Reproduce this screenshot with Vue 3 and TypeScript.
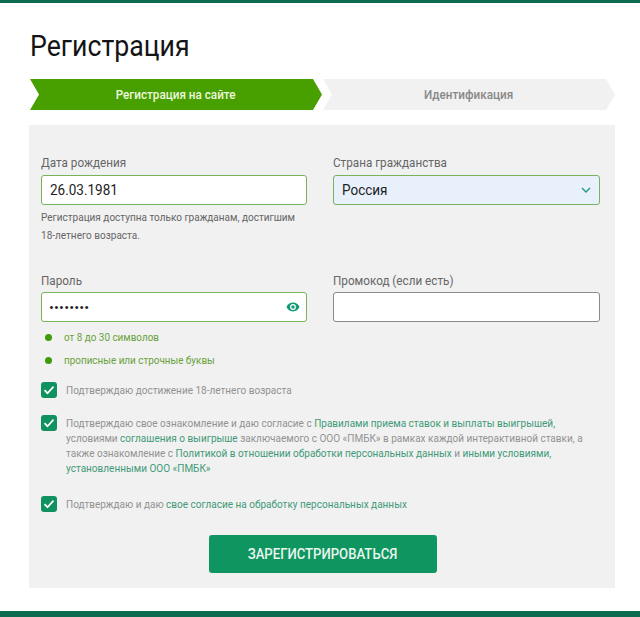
<script setup lang="ts">
const birth = '26.03.1981'
const country = 'Россия'
const password = '••••••••'
const rules = ['от 8 до 30 символов', 'прописные или строчные буквы']
</script>

<template>
  <div class="page">
    <div class="top-bar"></div>
    <main class="content">
      <h1 class="title">Регистрация</h1>
      <div class="steps">
        <div class="step step-active"><span class="mid">Регистрация на сайте</span></div>
        <div class="step step-next"><span class="mid">Идентификация</span></div>
      </div>
      <form class="panel" @submit.prevent>
        <div class="row row-one">
          <div class="field">
            <label class="label">Дата рождения</label>
            <div class="input"><span class="narrow">{{ birth }}</span></div>
            <p class="hint">Регистрация доступна только гражданам, достигшим<br />18-летнего возраста.</p>
          </div>
          <div class="field">
            <label class="label">Страна гражданства</label>
            <div class="input input-select">
              <span class="narrow">{{ country }}</span>
              <svg class="chevron" width="10" height="6" viewBox="0 0 10 6">
                <path d="M1 1l4 4 4-4" fill="none" stroke="#1f9a8a" stroke-width="1.4" />
              </svg>
            </div>
          </div>
        </div>
        <div class="row row-two">
          <div class="field">
            <label class="label">Пароль</label>
            <div class="input input-pass">
              <span class="dots">{{ password }}</span>
              <svg class="eye" width="14" height="10" viewBox="0 0 14 10">
                <path d="M7 .6C4 .6 1.6 2.4.5 5c1.1 2.6 3.5 4.4 6.5 4.4s5.4-1.8 6.5-4.4C12.4 2.4 10 .6 7 .6zm0 7.3A2.9 2.9 0 1 1 7 2.1a2.9 2.9 0 0 1 0 5.8z" fill="#149a76" />
                <circle cx="7" cy="5" r="1.7" fill="#149a76" />
              </svg>
            </div>
            <ul class="rules">
              <li v-for="rule in rules" :key="rule"><i class="dot"></i><span class="narrow">{{ rule }}</span></li>
            </ul>
          </div>
          <div class="field">
            <label class="label">Промокод (если есть)</label>
            <div class="input input-promo"></div>
          </div>
        </div>
        <div class="check check-a">
          <span class="box"><svg width="12" height="10" viewBox="0 0 12 10"><path d="M1.5 5.2l3 3 6-6.6" fill="none" stroke="#fff" stroke-width="1.7" /></svg></span>
          <span class="check-text">Подтверждаю достижение 18-летнего возраста</span>
        </div>
        <div class="check check-b">
          <span class="box"><svg width="12" height="10" viewBox="0 0 12 10"><path d="M1.5 5.2l3 3 6-6.6" fill="none" stroke="#fff" stroke-width="1.7" /></svg></span>
          <span class="check-text">Подтверждаю свое ознакомление и даю согласие с <a>Правилами приема ставок и выплаты выигрышей,</a><br />условиями <a>соглашения о выигрыше</a> заключаемого с ООО «ПМБК» в рамках каждой интерактивной ставки, а<br />также ознакомление с <a>Политикой в отношении обработки персональных данных</a> и <a>иными условиями,</a><br /><a>установленными ООО «ПМБК»</a></span>
        </div>
        <div class="check check-c">
          <span class="box"><svg width="12" height="10" viewBox="0 0 12 10"><path d="M1.5 5.2l3 3 6-6.6" fill="none" stroke="#fff" stroke-width="1.7" /></svg></span>
          <span class="check-text">Подтверждаю и даю <a>свое согласие на обработку персональных данных</a></span>
        </div>
        <div class="actions">
          <button class="submit" type="submit"><span class="mid mid-btn">ЗАРЕГИСТРИРОВАТЬСЯ</span></button>
        </div>
      </form>
    </main>
    <div class="bottom-bar"></div>
  </div>
</template>

<style>
html, body { margin: 0; background: #fff; }
</style>

<style scoped>
.page { width: 640px; height: 617px; overflow: hidden; display: flex; flex-direction: column; font-family: Roboto, "Liberation Sans", sans-serif; color: #1c1c1c; }
.top-bar { height: 3px; background: #0b6c50; flex: none; }
.bottom-bar { height: 6px; background: #0b6c50; flex: none; }
.content { flex: 1; padding: 0 25px 0 29px; display: flex; flex-direction: column; }
.title { margin: 25px 0 0 1px; font-size: 30px; line-height: 36px; font-weight: 400; color: #141414; white-space: nowrap; transform: scaleX(.89); transform-origin: left center; }
.steps { display: flex; margin-top: 15px; gap: 1px; height: 31px; margin-left: 1px; width: 585px; }
.step { flex: 1; display: flex; align-items: center; justify-content: center; font-size: 13px; font-weight: 500; clip-path: polygon(0 0, calc(100% - 9px) 0, 100% 50%, calc(100% - 9px) 100%, 0 100%, 9px 50%); }
.step-active { background: #48a000; color: #eef6dd; }
.step-next { background: #f1f1f1; color: #888; }
.mid { display: inline-block; white-space: nowrap; transform: scaleX(.9); }
.mid-btn { transform: scaleX(.875); margin-right: 2px; }
.narrow { display: inline-block; white-space: nowrap; transform: scaleX(.9); transform-origin: left center; }
.panel { margin-top: 15px; height: 463px; box-sizing: border-box; background: #f1f1f1; padding: 30px 15px 0 12px; display: flex; flex-direction: column; }
.row { display: grid; grid-template-columns: 266px 267px; column-gap: 26px; }
.row-one { height: 112px; }
.row-two { margin-top: 5px; height: 110px; }
.row-two .label { margin-top: 1px; margin-bottom: 3px; }
.field { display: flex; flex-direction: column; }
.label { font-size: 13px; line-height: 16px; color: #666; margin-bottom: 4px; white-space: nowrap; transform: scaleX(.9); transform-origin: left center; }
.input { box-sizing: border-box; height: 30px; border: 1.5px solid #76b35a; border-radius: 3px; background: #fff; padding: 0 8px 0 7.5px; display: flex; align-items: center; justify-content: space-between; font-size: 15px; color: #222; }
.input-select { background: #e8f0fb; }
.input-promo { border-color: #8a8a8a; border-width: 1px; }
.input-pass { padding-right: 6px; }
.dots { font-size: 11px; letter-spacing: 1.2px; font-family: "Liberation Sans", sans-serif; }
.hint { margin: 4px 0 0; font-size: 11px; line-height: 18px; color: #666; white-space: nowrap; transform: scaleX(.91); transform-origin: left center; }
.rules { list-style: none; margin: 4px 0 0; padding: 0; }
.rules li { display: flex; align-items: center; height: 23px; font-size: 11px; color: #68a23c; }
.dot { width: 7px; height: 7px; border-radius: 50%; background: #3f9b0b; margin: 0 12px 0 4px; flex: none; }
.check { display: flex; align-items: flex-start; gap: 9px; }
.check-b { margin-top: 17px; }
.check-c { margin-top: 20px; }
.box { width: 16px; height: 16px; border-radius: 3px; background: #0f9160; display: flex; align-items: center; justify-content: center; flex: none; }
.check-text { padding-top: 1px; font-size: 11px; line-height: 15px; color: #929292; white-space: nowrap; transform: scaleX(.91); transform-origin: left top; }
.check-text a { color: #3f9a78; }
.actions { display: flex; justify-content: center; margin-top: 23px; padding-left: 5px; }
.submit { width: 228px; height: 38px; border: none; border-radius: 3px; background: #0f9660; color: #eaf5ee; font-family: inherit; font-size: 15px; font-weight: 500; padding: 0; }
</style>
